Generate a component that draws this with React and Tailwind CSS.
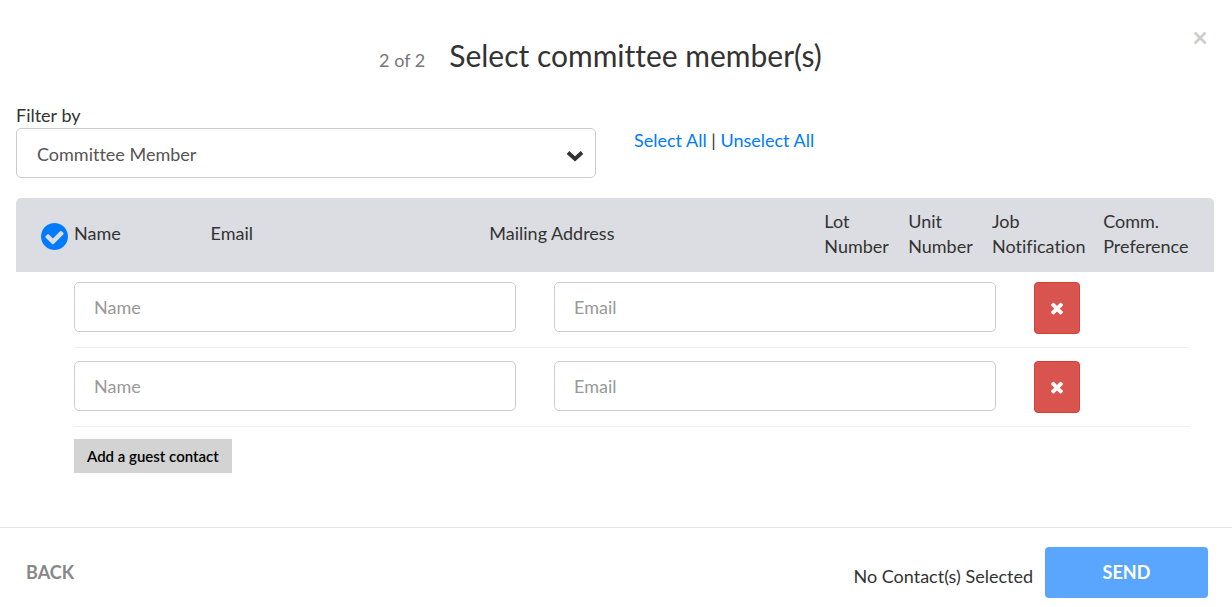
import { useState } from 'react'

const columns = [
  { label: 'Name', width: 'w-[11.8%]' },
  { label: 'Email', width: 'w-[24.1%]' },
  { label: 'Mailing Address', width: 'w-auto' },
  { label: 'Lot Number', width: 'w-[7.25%]' },
  { label: 'Unit Number', width: 'w-[7.25%]' },
  { label: 'Job Notification', width: 'w-[9.6%]' },
  { label: 'Comm. Preference', width: 'w-[8.2%]' }
]

function CheckCircleIcon() {
  return (
    <svg viewBox="128 128 1536 1536" className="size-[27px] fill-[#007bff]" aria-hidden="true">
      <path d="M1412 734q0-28-18-46l-91-90q-19-19-45-19t-45 19l-408 407-226-226q-19-19-45-19t-45 19l-91 90q-18 18-18 46 0 27 18 45l362 362q19 19 45 19 27 0 46-19l543-543q18-18 18-45zm252 162q0 209-103 385.5t-279.5 279.5-385.5 103-385.5-103-279.5-279.5-103-385.5 103-385.5 279.5-279.5 385.5-103 385.5 103 279.5 279.5 103 385.5z" />
    </svg>
  )
}

function RemoveIcon() {
  return (
    <svg viewBox="0 0 1792 1792" className="size-[18px] fill-white" aria-hidden="true">
      <path d="M1490 1322q0 40-28 68l-136 136q-28 28-68 28t-68-28l-294-294-294 294q-28 28-68 28t-68-28l-136-136q-28-28-28-68t28-68l294-294-294-294q-28-28-28-68t28-68l136-136q28-28 68-28t68 28l294 294 294-294q28-28 68-28t68 28l136 136q28 28 28 68t-28 68l-294 294 294 294q28 28 28 68z" />
    </svg>
  )
}

function GuestRow({ guest, onChange, onRemove }) {

  const inputClass = 'h-[50px] min-w-0 flex-1 rounded-[5px] border border-[#ccc] px-[19px] text-[#555] placeholder:text-[#999]'

  return (
    <div className="mb-[13px] flex items-start gap-[38px] border-b border-[#eee] pb-[13px] last-of-type:mb-3">
      <input
        type="text"
        aria-label="Guest name"
        placeholder="Name"
        value={guest.name}
        onChange={function(e) { onChange({ ...guest, name: e.target.value }) }}
        className={inputClass}
      />
      <input
        type="email"
        aria-label="Guest email"
        placeholder="Email"
        value={guest.email}
        onChange={function(e) { onChange({ ...guest, email: e.target.value }) }}
        className={inputClass}
      />
      <button
        type="button"
        aria-label="Remove guest"
        onClick={onRemove}
        className="mr-[109px] flex h-[52px] w-[46px] items-center justify-center rounded-[4px] border border-[#d43f3a] bg-[#d9534f]"
      >
        <RemoveIcon />
      </button>
    </div>
  )
}

function App() {

  const [filter, setFilter] = useState('committee')
  const [allSelected, setAllSelected] = useState(true)
  const [guests, setGuests] = useState([
    { id: 1, name: '', email: '' },
    { id: 2, name: '', email: '' }
  ])

  function updateGuest(updated) {
    setGuests(guests.map(function(g) { return g.id === updated.id ? updated : g }))
  }

  function removeGuest(id) {
    setGuests(guests.filter(function(g) { return g.id !== id }))
  }

  function addGuest() {
    setGuests([...guests, { id: Date.now(), name: '', email: '' }])
  }

  return (
    <div className="bg-white font-['Lato',sans-serif] text-[18px] leading-[25px] text-[#333] [font-variant-ligatures:none]">

      <header className="relative flex items-baseline justify-center gap-6 pt-[34px] pr-[31px] pb-[27px]">
        <span className="text-[#777]">2 of 2</span>
        <h1 className="text-[30px] leading-[42px]">Select committee member(s)</h1>
        <button
          type="button"
          aria-label="Close"
          className="absolute top-6 right-6 text-[27px] leading-[25px] font-bold text-[#ccc]"
        >
          ×
        </button>
      </header>

      <main className="pr-[18px] pl-4">

        <div className="grid grid-cols-2 gap-[38px]">
          <div>
            <label htmlFor="filter" className="block">Filter by</label>
            <div className="relative">
              <select
                id="filter"
                value={filter}
                onChange={function(e) { setFilter(e.target.value) }}
                className="h-[50px] w-full appearance-none rounded-[5px] border border-[#ccc] bg-white pt-[2px] pr-10 pl-5 text-[#555]"
              >
                <option value="committee">Committee Member</option>
                <option value="owner">Owner</option>
                <option value="tenant">Tenant</option>
              </select>
              <svg viewBox="0 0 18 12" className="pointer-events-none absolute top-[22px] right-3 h-3 w-[18px]" aria-hidden="true">
                <path d="M2 2.5l7 6.5 7-6.5" fill="none" stroke="#333" strokeWidth="3.8" />
              </svg>
            </div>
          </div>
          <div className="pt-[25px]">
            <button type="button" onClick={function() { setAllSelected(true) }} className="text-[#007bff]">Select All</button>
            {' | '}
            <button type="button" onClick={function() { setAllSelected(false) }} className="text-[#007bff]">Unselect All</button>
          </div>
        </div>

        <div className="mt-5 rounded-t-[5px] bg-[#dcdde2] pr-4 pl-[25px]">
          <table className="w-full table-fixed">
            <thead>
              <tr className="h-[74px]">
                <th className="w-[33px] pt-[2px]">
                  <label className="block cursor-pointer">
                    <input
                      type="checkbox"
                      aria-label="Select all contacts"
                      checked={allSelected}
                      onChange={function(e) { setAllSelected(e.target.checked) }}
                      className="sr-only"
                    />
                    <CheckCircleIcon />
                  </label>
                </th>
                {columns.map(function(col) {
                  return (
                    <th key={col.label} scope="col" className={'pr-1 pb-[3px] text-left font-normal ' + col.width}>
                      {col.label}
                    </th>
                  )
                })}
              </tr>
            </thead>
          </table>
        </div>

        <div className="mr-[25px] ml-[58px] pt-[10px]">
          {guests.map(function(guest) {
            return (
              <GuestRow
                key={guest.id}
                guest={guest}
                onChange={updateGuest}
                onRemove={function() { removeGuest(guest.id) }}
              />
            )
          })}
          <button
            type="button"
            onClick={addGuest}
            className="block h-[34px] bg-[#d3d3d3] px-[13px] text-[15px] font-semibold text-black"
          >
            Add a guest contact
          </button>
        </div>

      </main>

      <footer className="mt-[54px] flex items-center justify-between border-t border-[#e5e5e5] pt-[19px] pr-6 pb-[9px] pl-[26px]">
        <button type="button" className="font-bold text-[#888]">BACK</button>
        <div className="flex items-center gap-3">
          <span className="pt-2">No Contact(s) Selected</span>
          <button type="button" className="h-[51px] w-[163px] rounded-[4px] bg-[#5aa6ff] font-bold text-white">
            SEND
          </button>
        </div>
      </footer>

    </div>
  )
}

export default App
